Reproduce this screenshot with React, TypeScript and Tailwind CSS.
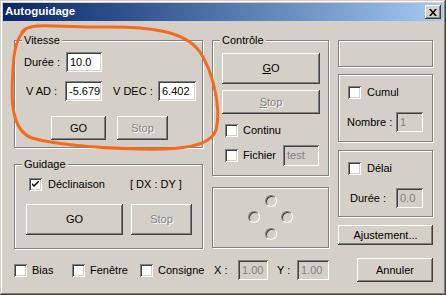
import React from "react";

const raised =
	"bg-[#d4d0c8] shadow-[inset_-1px_-1px_#404040,inset_1px_1px_#fff,inset_-2px_-2px_#808080,inset_2px_2px_#d4d0c8]";
const sunken =
	"shadow-[inset_1px_1px_#808080,inset_-1px_-1px_#fff,inset_2px_2px_#404040,inset_-2px_-2px_#d4d0c8]";
const etched = "border border-[#808080] shadow-[inset_1px_1px_#fff,1px_1px_#fff]";
const disabledText = "text-[#808080] [text-shadow:1px_1px_#fff]";

const Btn = ({
	label,
	className,
	disabled = false,
	accel = false,
}: {
	label: string;
	className: string;
	disabled?: boolean;
	accel?: boolean;
}) => (
	<div className={`${raised} flex items-center justify-center ${className}`}>
		<span className={disabled ? disabledText : "text-black"}>
			{accel ? (
				<>
					<span className="underline underline-offset-[1px]">{label[0]}</span>
					{label.slice(1)}
				</>
			) : (
				label
			)}
		</span>
	</div>
);

const Field = ({
	value,
	className,
	disabled = false,
}: {
	value: string;
	className: string;
	disabled?: boolean;
}) => (
	<div
		className={`${sunken} ${disabled ? "bg-[#d4d0c8] text-[#808080]" : "bg-white text-black"} flex items-center pl-[4px] ${className}`}
	>
		{value}
	</div>
);

const Check = ({ checked = false }: { checked?: boolean }) => (
	<div className={`${sunken} bg-white w-[13px] h-[13px] shrink-0 flex items-center justify-center`}>
		{checked && (
			<svg width="7" height="7" viewBox="0 0 7 7">
				<path d="M0 2 L0 4 L2 6 L7 1 L7 -1 L2 4 Z" fill="#000" />
			</svg>
		)}
	</div>
);

const Group = ({
	title,
	className,
	children,
}: {
	title?: string;
	className: string;
	children?: React.ReactNode;
}) => (
	<div className={`relative ${etched} ${className}`}>
		{title && (
			<span className="absolute -top-[7px] left-[7px] px-[2px] bg-[#d4d0c8] leading-[13px]">
				{title}
			</span>
		)}
		{children}
	</div>
);

const Radio = () => (
	<div className="w-[12px] h-[12px] rounded-full border border-t-[#808080] border-l-[#808080] border-r-white border-b-white shadow-[inset_1px_1px_#404040,inset_-1px_-1px_#d4d0c8]" />
);

export default function App() {
	return (
		<div className="relative w-[446px] h-[295px] bg-[#d4d0c8] p-[3px] font-['Liberation_Sans',Arial,sans-serif] text-[11px] text-black shadow-[inset_-1px_-1px_#404040,inset_1px_1px_#d4d0c8,inset_-2px_-2px_#808080,inset_2px_2px_#fff] overflow-hidden">
			{/* title bar */}
			<div className="h-[18px] bg-gradient-to-r from-[#0a246a] to-[#a6caf0] flex items-center pl-[2px] pr-[2px]">
				<span className="text-white font-bold text-[11.5px]">Autoguidage</span>
				<div className={`${raised} ml-auto w-[16px] h-[14px] flex items-center justify-center`}>
					<svg width="8" height="7" viewBox="0 0 8 7">
						<path d="M0 0 L2 0 L4 2.5 L6 0 L8 0 L5 3.5 L8 7 L6 7 L4 4.5 L2 7 L0 7 L3 3.5 Z" fill="#000" />
					</svg>
				</div>
			</div>

			<div className="pl-[11px] pt-[19px]">
				<div className="flex items-start gap-[9px]">
					{/* left column */}
					<div className="flex flex-col w-[189px]">
						<Group title="Vitesse" className="h-[108px] pt-[11px]">
							<div className="flex items-center pl-[9px]">
								<span className="w-[42px]">Durée :</span>
								<Field value="10.0" className="w-[36px] h-[20px]" />
							</div>
							<div className="flex items-center pl-[11px] mt-[9px]">
								<span className="w-[39px]">V AD :</span>
								<Field value="-5.679" className="w-[37px] h-[20px]" />
								<span className="w-[45px] ml-[11px]">V DEC :</span>
								<Field value="6.402" className="w-[38px] h-[20px]" />
							</div>
							<div className="flex mt-[15px] pl-[36px] gap-[11px]">
								<Btn label="GO" className="w-[55px] h-[24px]" />
								<Btn label="Stop" disabled className="w-[51px] h-[24px]" />
							</div>
						</Group>
						<Group title="Guidage" className="mt-[16px] h-[85px] pt-[13px]">
							<div className="flex items-center pl-[14px] h-[13px]">
								<Check checked />
								<span className="ml-[6px] w-[82px]">Déclinaison</span>
								<span>[ DX : DY ]</span>
							</div>
							<div className="flex mt-[13px] pl-[11px] gap-[8px]">
								<Btn label="GO" className="w-[97px] h-[31px]" />
								<Btn label="Stop" disabled className="w-[61px] h-[31px]" />
							</div>
						</Group>
					</div>

					{/* middle column */}
					<div className="flex flex-col w-[117px]">
						<Group title="Contrôle" className="h-[136px] pt-[12px] pl-[9px]">
							<Btn label="GO" accel className="w-[98px] h-[31px]" />
							<Btn label="Stop" accel disabled className="w-[98px] h-[24px] mt-[6px]" />
							<div className="flex items-center mt-[10px] pl-[3px] h-[13px]">
								<Check />
								<span className="ml-[5px]">Continu</span>
							</div>
							<div className="flex items-center mt-[8px] pl-[3px] h-[21px]">
								<Check />
								<span className="ml-[5px] w-[40px]">Fichier</span>
								<Field value="test" disabled className="w-[36px] h-[21px]" />
							</div>
						</Group>
						<Group className="mt-[11px] h-[61px] flex items-center justify-center">
							<div className="grid grid-cols-[16.5px_16.5px_16.5px] grid-rows-[16.5px_16.5px_16.5px] place-items-center -mt-[1px]">
								<div />
								<Radio />
								<div />
								<Radio />
								<div />
								<Radio />
								<div />
								<Radio />
								<div />
							</div>
						</Group>
					</div>

					{/* right column */}
					<div className="flex flex-col w-[95px]">
						<Group className="h-[27px]" />
						<Group className="mt-[7px] h-[68px] pt-[11px] pl-[9px]">
							<div className="flex items-center h-[13px]">
								<Check />
								<span className="ml-[6px]">Cumul</span>
							</div>
							<div className="flex items-center mt-[13px] -ml-[1px]">
								<span className="w-[49px]">Nombre :</span>
								<Field value="1" disabled className="w-[27px] h-[20px]" />
							</div>
						</Group>
						<Group className="mt-[8px] h-[67px] pt-[11px] pl-[9px]">
							<div className="flex items-center h-[13px]">
								<Check />
								<span className="ml-[6px]">Délai</span>
							</div>
							<div className="flex items-center mt-[13px] pl-[2px]">
								<span className="w-[46px]">Durée :</span>
								<Field value="0.0" disabled className="w-[27px] h-[20px]" />
							</div>
						</Group>
						<Btn label="Ajustement..." className="mt-[8px] w-[95px] h-[20px]" />
					</div>
				</div>

				{/* bottom row */}
				<div className="flex items-center mt-[9px] h-[24px]">
					<div className="flex items-center w-[58px]">
						<Check />
						<span className="ml-[5px]">Bias</span>
					</div>
					<div className="flex items-center w-[68px]">
						<Check />
						<span className="ml-[5px]">Fenêtre</span>
					</div>
					<div className="flex items-center w-[74px]">
						<Check />
						<span className="ml-[5px]">Consigne</span>
					</div>
					<span className="w-[24px]">X :</span>
					<Field value="1.00" disabled className="w-[30px] h-[20px]" />
					<span className="ml-[9px] w-[20px]">Y :</span>
					<Field value="1.00" disabled className="w-[32px] h-[20px]" />
					<Btn label="Annuler" className="ml-[28px] w-[76px] h-[24px]" />
				</div>
			</div>

			{/* hand-drawn highlight */}
			<svg className="absolute inset-0 pointer-events-none" width="446" height="295" viewBox="0 0 446 295">
				<path
					d="M22 32 C30 21 60 28 100 27 C150 26 185 31 200 52 C212 70 222 108 216 130 C210 147 180 150 140 149 C100 148 60 146 32 138 C10 130 11 95 13 70 C14 50 16 38 26 29"
					fill="none"
					stroke="#f46a1f"
					strokeWidth="3"
					strokeLinecap="round"
				/>
			</svg>
		</div>
	);
}
